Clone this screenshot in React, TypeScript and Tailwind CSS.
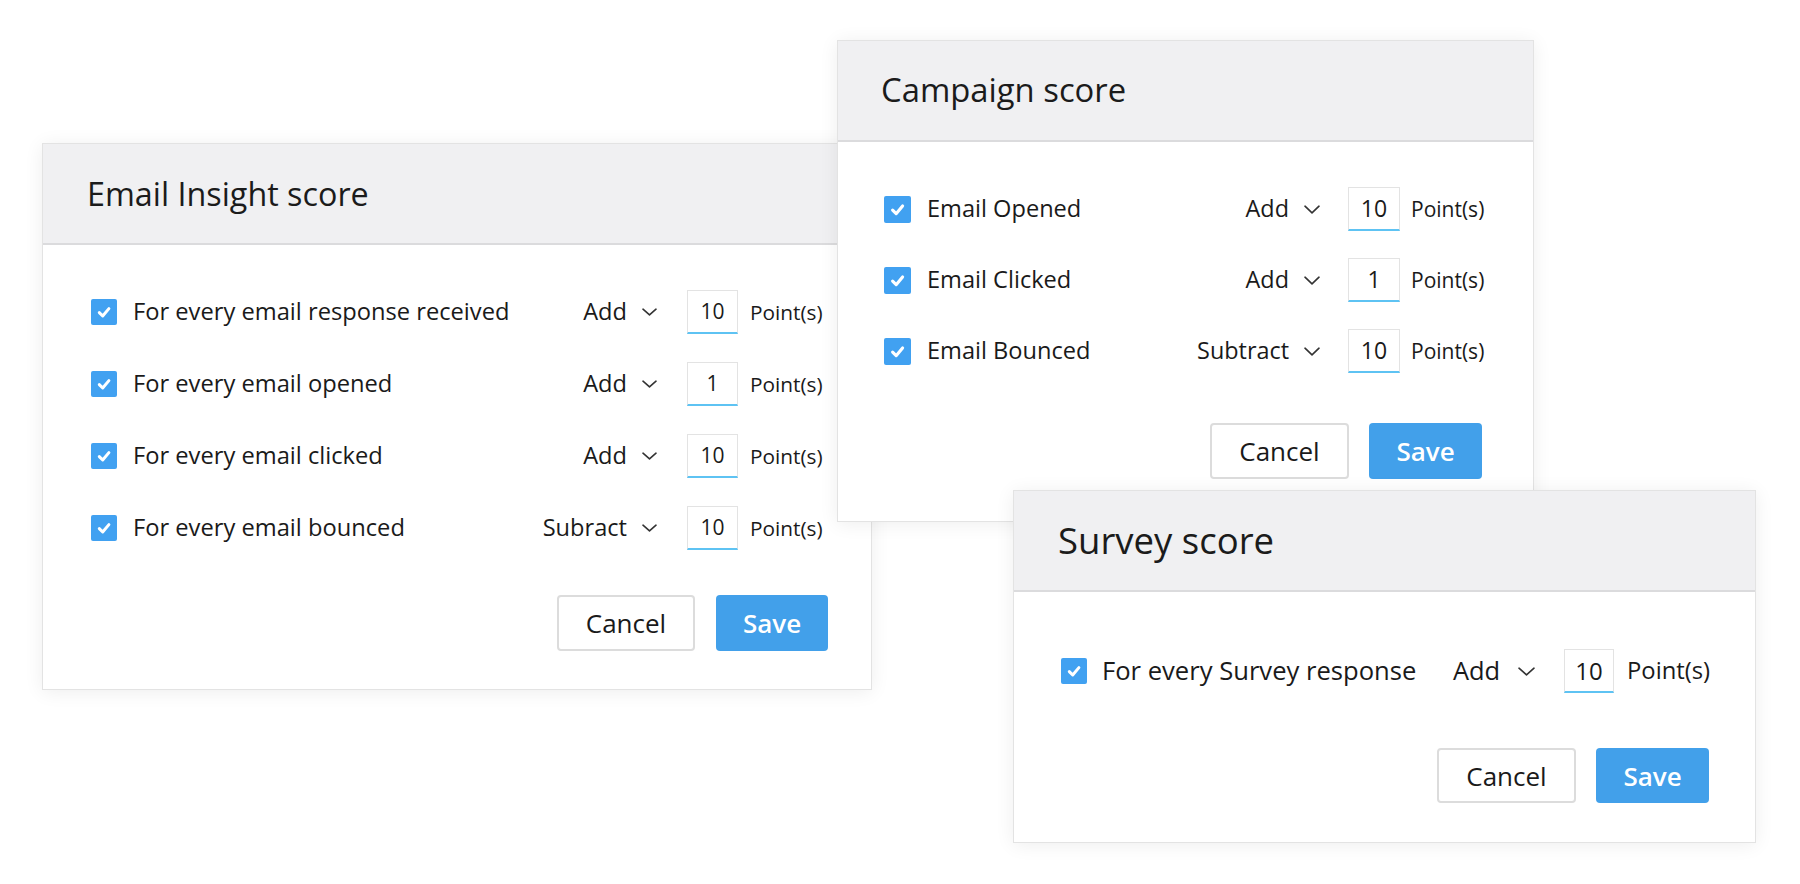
import React from "react";

type Variant = "email" | "campaign" | "survey";

const V = {
  email: {
    check: "w-[26px] h-[26px]",
    label: "ml-[16px] text-[23.7px]",
    op: "gap-[15px] text-[23.6px]",
    chev: 15,
    input: "ml-[30px] w-[51px] text-[21px]",
    unit: "ml-[12px] w-[74px] text-[20.8px]",
  },
  campaign: {
    check: "w-[27px] h-[27px]",
    label: "ml-[16px] text-[23.6px]",
    op: "gap-[15px] text-[23.4px]",
    chev: 16,
    input: "ml-[28px] w-[52px] text-[23px]",
    unit: "ml-[11px] w-[75px] text-[21px]",
  },
  survey: {
    check: "w-[26px] h-[26px]",
    label: "ml-[15px] text-[25.6px]",
    op: "gap-[18px] text-[25.4px]",
    chev: 17,
    input: "ml-[29px] w-[50px] text-[24px]",
    unit: "ml-[13px] w-[85px] text-[23.8px]",
  },
};

function Check({ cls }: { cls: string }) {
  return (
    <span className={`${cls} shrink-0 rounded-[2px] bg-[#41a1f1] flex items-center justify-center`}>
      <svg viewBox="0 0 26 26" className="w-full h-full">
        <polyline
          points="8.3,13.6 11.7,17 17.9,9.6"
          fill="none"
          stroke="white"
          strokeWidth="3"
          strokeLinecap="round"
          strokeLinejoin="round"
        />
      </svg>
    </span>
  );
}

function Chevron({ w }: { w: number }) {
  const h = Math.round(w * 0.55);
  return (
    <svg width={w} height={h} viewBox={`0 0 ${w} ${h}`} className="shrink-0">
      <polyline
        points={`1,1.2 ${w / 2},${h - 1.2} ${w - 1},1.2`}
        fill="none"
        stroke="#333"
        strokeWidth="1.6"
        strokeLinecap="round"
        strokeLinejoin="round"
      />
    </svg>
  );
}

function Row({
  v,
  label,
  op,
  value,
}: {
  v: Variant;
  label: string;
  op: string;
  value: string;
}) {
  const s = V[v];
  return (
    <div className="h-[44px] flex items-center text-[#1a1a1a]">
      <Check cls={s.check} />
      <span className={`${s.label} whitespace-nowrap leading-none`}>{label}</span>
      <div className={`ml-auto flex items-center ${s.op} leading-none`}>
        <span>{op}</span>
        <Chevron w={s.chev} />
      </div>
      <div
        className={`${s.input} h-[44px] shrink-0 border border-[#e3e3e3] border-b-2 border-b-[#5ec3f3] flex items-center justify-center leading-none`}
      >
        {value}
      </div>
      <span className={`${s.unit} shrink-0 whitespace-nowrap leading-none`}>Point(s)</span>
    </div>
  );
}

function Buttons({ wrap, cancel, save }: { wrap: string; cancel: string; save: string }) {
  return (
    <div className={`flex justify-end ${wrap}`}>
      <button
        className={`${cancel} bg-white border-2 border-[#dcdcdc] rounded-[4px] text-[#1a1a1a] text-[26px] leading-none flex items-center justify-center`}
      >
        Cancel
      </button>
      <button
        className={`${save} bg-[#42a0ea] rounded-[4px] text-white text-[26px] font-semibold leading-none flex items-center justify-center`}
      >
        Save
      </button>
    </div>
  );
}

export default function App() {
  return (
    <div className="relative w-[1800px] h-[884px] bg-white overflow-hidden font-['Open_Sans',sans-serif]">
      {/* Email Insight score */}
      <div className="absolute left-[42px] top-[143px] w-[830px] h-[547px] z-0 bg-white border border-[#e3e3e3] shadow-[0_2px_18px_rgba(0,0,0,0.07)] flex flex-col">
        <div className="h-[101px] shrink-0 bg-[#f0f0f2] border-b-2 border-[#dbdbdd] flex items-center pl-[44px]">
          <h2 className="text-[32.3px] text-[#1b1b1b] font-normal leading-none">Email Insight score</h2>
        </div>
        <div className="pt-[45px] pl-[48px] pr-[47px] flex flex-col gap-[28px]">
          <Row v="email" label="For every email response received" op="Add" value="10" />
          <Row v="email" label="For every email opened" op="Add" value="1" />
          <Row v="email" label="For every email clicked" op="Add" value="10" />
          <Row v="email" label="For every email bounced" op="Subract" value="10" />
        </div>
        <Buttons wrap="mt-[45px] pr-[43px] gap-[21px]" cancel="w-[138px] h-[56px]" save="w-[112px] h-[56px]" />
      </div>

      {/* Campaign score */}
      <div className="absolute left-[837px] top-[40px] w-[697px] h-[482px] z-10 bg-white border border-[#e3e3e3] shadow-[0_2px_18px_rgba(0,0,0,0.07)] flex flex-col">
        <div className="h-[101px] shrink-0 bg-[#f0f0f2] border-b-2 border-[#dbdbdd] flex items-center pl-[43px]">
          <h2 className="text-[32.8px] text-[#1b1b1b] font-normal leading-none">Campaign score</h2>
        </div>
        <div className="pt-[45px] pl-[46px] pr-[47px] flex flex-col gap-[27px]">
          <Row v="campaign" label="Email Opened" op="Add" value="10" />
          <Row v="campaign" label="Email Clicked" op="Add" value="1" />
          <Row v="campaign" label="Email Bounced" op="Subtract" value="10" />
        </div>
        <Buttons wrap="mt-[50px] pr-[51px] gap-[20px]" cancel="w-[139px] h-[56px]" save="w-[113px] h-[56px]" />
      </div>

      {/* Survey score */}
      <div className="absolute left-[1013px] top-[490px] w-[743px] h-[353px] z-20 bg-white border border-[#e3e3e3] shadow-[0_2px_18px_rgba(0,0,0,0.07)] flex flex-col">
        <div className="h-[101px] shrink-0 bg-[#f0f0f2] border-b-2 border-[#dbdbdd] flex items-center pl-[44px]">
          <h2 className="text-[36.5px] text-[#1b1b1b] font-normal leading-none">Survey score</h2>
        </div>
        <div className="pt-[57px] pl-[47px] pr-[43px] flex flex-col">
          <Row v="survey" label="For every Survey response" op="Add" value="10" />
        </div>
        <Buttons wrap="mt-[55px] pr-[46px] gap-[20px]" cancel="w-[139px] h-[55px]" save="w-[113px] h-[55px]" />
      </div>
    </div>
  );
}
